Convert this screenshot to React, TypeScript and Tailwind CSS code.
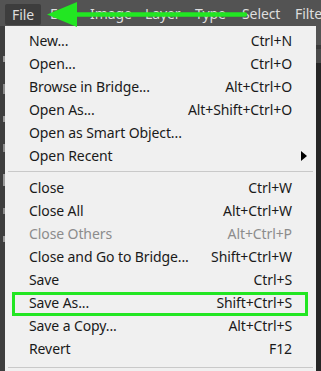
import React from "react";

type Item =
  | { kind: "item"; label: string; shortcut?: string; disabled?: boolean; submenu?: boolean }
  | { kind: "sep" };

const items: Item[] = [
  { kind: "item", label: "New...", shortcut: "Ctrl+N" },
  { kind: "item", label: "Open...", shortcut: "Ctrl+O" },
  { kind: "item", label: "Browse in Bridge...", shortcut: "Alt+Ctrl+O" },
  { kind: "item", label: "Open As...", shortcut: "Alt+Shift+Ctrl+O" },
  { kind: "item", label: "Open as Smart Object..." },
  { kind: "item", label: "Open Recent", submenu: true },
  { kind: "sep" },
  { kind: "item", label: "Close", shortcut: "Ctrl+W" },
  { kind: "item", label: "Close All", shortcut: "Alt+Ctrl+W" },
  { kind: "item", label: "Close Others", shortcut: "Alt+Ctrl+P", disabled: true },
  { kind: "item", label: "Close and Go to Bridge...", shortcut: "Shift+Ctrl+W" },
  { kind: "item", label: "Save", shortcut: "Ctrl+S" },
  { kind: "item", label: "Save As...", shortcut: "Shift+Ctrl+S" },
  { kind: "item", label: "Save a Copy...", shortcut: "Alt+Ctrl+S" },
  { kind: "item", label: "Revert", shortcut: "F12" },
  { kind: "sep" },
];

export default function App() {
  return (
    <div
      className="relative w-[321px] h-[371px] overflow-hidden bg-[#282828] flex flex-col"
      style={{ fontFamily: '"Noto Sans", "Open Sans", sans-serif' }}
    >
      {/* Menu bar */}
      <div className="h-[26px] bg-[#535353] flex items-center text-[14px] text-[#dedede] shrink-0 tracking-[-0.1px] overflow-hidden">
        <div className="shrink-0 ml-[5px] w-[36px] h-[21px] mt-[2px] bg-[#3d3d3d] rounded-[2px] flex items-center pl-[7px]">File</div>
        <span className="shrink-0 ml-[9px] w-[40px]">Edit</span>
        <span className="shrink-0 w-[55px]">Image</span>
        <span className="shrink-0 w-[50px]">Layer</span>
        <span className="shrink-0 w-[47px]">Type</span>
        <span className="shrink-0 w-[53px]">Select</span>
        <span className="shrink-0 whitespace-nowrap">Filter</span>
      </div>

      <div className="flex flex-1 min-h-0">
        {/* left tools strip */}
        <div className="w-[5px] shrink-0 bg-[#3e3e3e] flex flex-col items-end gap-[22px] pt-[30px]">
          <div className="w-[2px] h-[6px] bg-[#9a9a9a]" />
          <div className="w-[2px] h-[10px] bg-[#8a8a8a]" />
          <div className="w-[2px] h-[6px] bg-[#9a9a9a]" />
          <div className="w-[2px] h-[8px] bg-[#8a8a8a]" />
          <div className="w-[2px] h-[12px] bg-[#9a9a9a]" />
          <div className="w-[2px] h-[6px] bg-[#8a8a8a]" />
          <div className="w-[2px] h-[6px] bg-[#9a9a9a]" />
        </div>

        {/* dropdown */}
        <div className="w-[311px] shrink-0 bg-[#f0f0f0] pt-[3px] text-[14px] tracking-[-0.1px] text-[#1a1a1a]">
          {items.map((it, i) =>
            it.kind === "sep" ? (
              <div key={i} className={`${i === items.length - 1 ? "h-[14px]" : "h-[9px]"} flex items-center px-[3px]`}>
                <div className="h-px w-full bg-[#c9c9c9]" />
              </div>
            ) : (
              <div
                key={i}
                className={`relative h-[23px] flex items-center justify-between pl-[24px] pr-[24px] leading-none whitespace-nowrap ${
                  it.disabled ? "text-[#8c8c8c]" : ""
                }`}
              >
                <span>{it.label}</span>
                {it.shortcut && <span>{it.shortcut}</span>}
                {it.submenu && (
                  <svg className="absolute right-[9px] top-[7px]" width="6" height="10" viewBox="0 0 6 10">
                    <path d="M0 0 L6 5 L0 10 Z" fill="#000" />
                  </svg>
                )}
              </div>
            )
          )}
        </div>

        {/* right strip */}
        <div className="w-[5px] shrink-0 flex flex-col">
          <div className="h-[19px] bg-[#535353]" />
          <div className="h-[4px] bg-[#3a3a3a]" />
          <div className="h-[14px] bg-[#4a4a4a]" />
          <div className="flex-1 bg-[#262626]" />
        </div>
      </div>

      {/* Green arrow overlay */}
      <svg className="absolute left-0 top-0" width="321" height="30" viewBox="0 0 321 30">
        <line x1="72" y1="14.5" x2="245" y2="14.5" stroke="#22e622" strokeWidth="4.5" strokeLinecap="round" />
        <path d="M47 14.5 L77 2 L77 27 Z" fill="#22e622" />
      </svg>

      {/* Green highlight box */}
      <div className="absolute left-[12px] top-[292px] w-[296px] h-[24px] border-[3px] border-[#22e622]" />
    </div>
  );
}
